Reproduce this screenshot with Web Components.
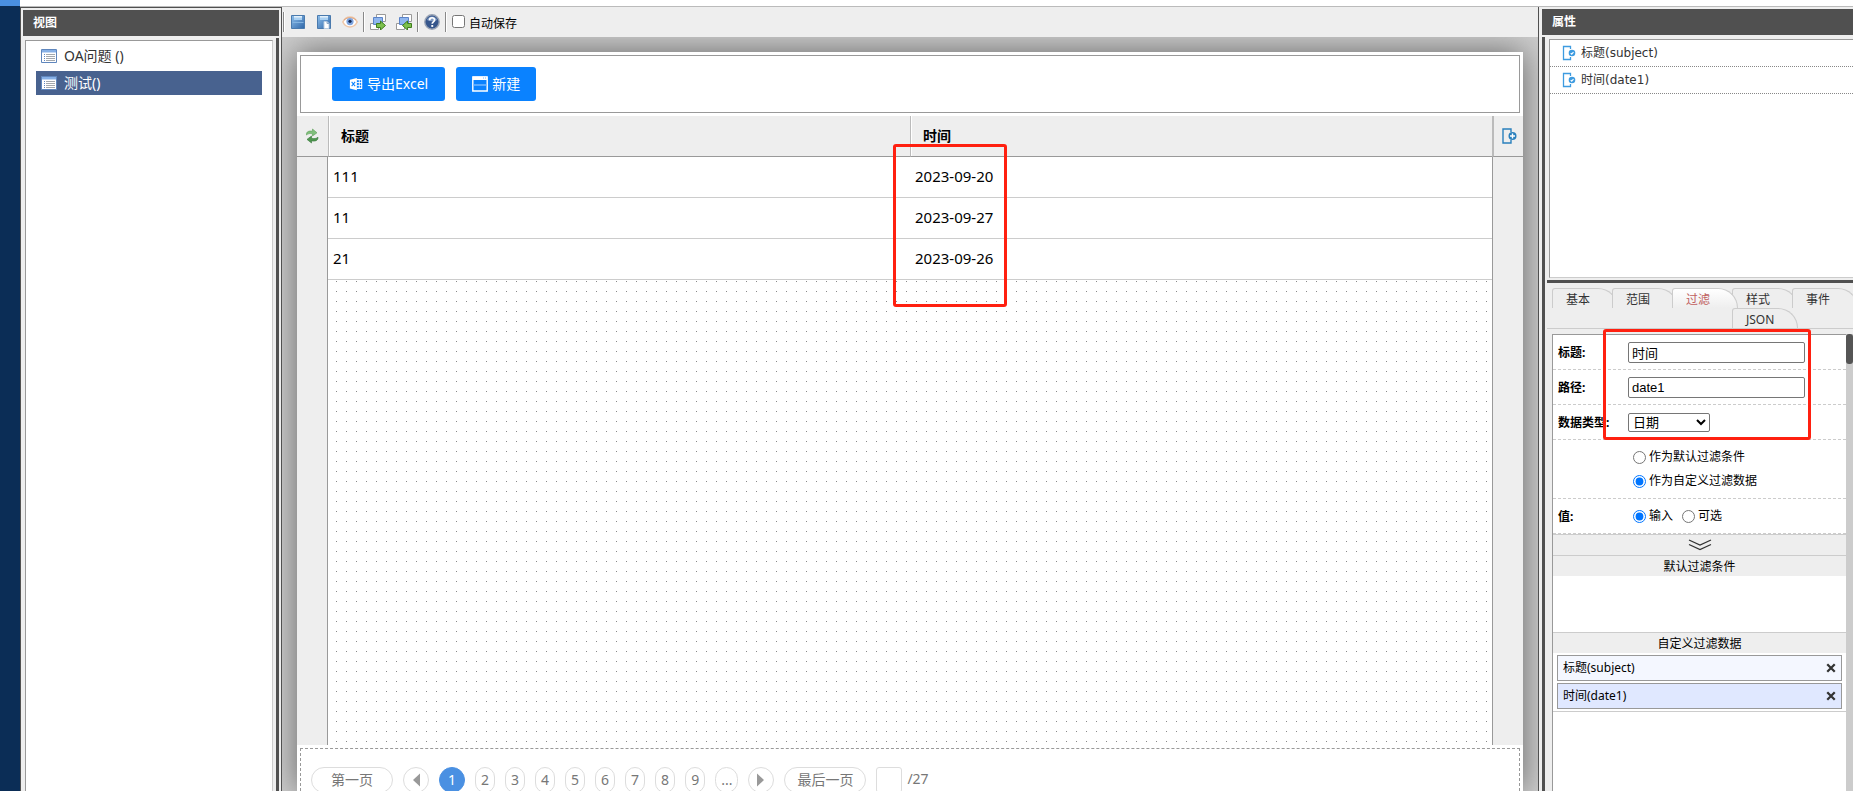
<!DOCTYPE html>
<html lang="zh-CN">
<head>
<meta charset="utf-8">
<title>视图设计</title>
<style>
  html, body {
    height: 100%;
    margin: 0;
    overflow: hidden;
  }

  body {
    font: 12px/18px "Noto Sans", "Noto Sans CJK SC", sans-serif;
    color: #000;
    background: #fff;
  }
</style>
</head>
<body>
<design-app>
  <side-panel slot="views" heading="视图" side="left">
    <view-list>
      <view-item>OA问题 ()</view-item>
      <view-item selected>测试()</view-item>
    </view-list>
  </side-panel>

  <tool-bar slot="main"></tool-bar>
  <page-stage slot="main">
    <page-actions>
      <action-button icon="excel">导出Excel</action-button>
      <action-button icon="window">新建</action-button>
    </page-actions>
    <data-grid></data-grid>
    <page-pager total="27" current="1"></page-pager>
  </page-stage>

  <side-panel slot="props" heading="属性" side="right">
    <field-list>
      <field-item>标题(subject)</field-item>
      <field-item>时间(date1)</field-item>
    </field-list>
    <prop-tabs></prop-tabs>
    <prop-form>
      <filter-item slot="custom">标题(subject)</filter-item>
      <filter-item slot="custom" selected>时间(date1)</filter-item>
    </prop-form>
  </side-panel>
</design-app>

<script>
class BaseElement extends HTMLElement {
  constructor() {
    super();

    this.attachShadow({mode: 'open'});
  }

  connectedCallback() {
    this.render();
  }

  render() {
    const template = document.createElement('template');

    template.innerHTML = `${this.getStyles()}\n${this.getContent()}`;

    this.shadowRoot.replaceChildren(template.content.cloneNode(true));
  }

  getStyles() {
    return '';
  }

  getContent() {
    return '<slot></slot>';
  }
}

const ICONS = {
  save: `
    <defs><linearGradient id="g" x1="0" y1="0" x2="1" y2="1"><stop offset="0" stop-color="#8fc0ec"/><stop offset="1" stop-color="#2e66a8"/></linearGradient></defs>
    <path d="M1.5 1.5h13v13h-13z" fill="url(#g)" stroke="#4a7aad"/>
    <path d="M4 2h8v4H4z" fill="#a9d0f2"/><path d="M4 2h8v1.500H4z" fill="#e2f0fb"/>
    <path d="M2.500 8.500h11" stroke="#84b4e0"/>`,
  saveas: `
    <defs><linearGradient id="g" x1="0" y1="0" x2="1" y2="1"><stop offset="0" stop-color="#8fc0ec"/><stop offset="1" stop-color="#2e66a8"/></linearGradient></defs>
    <path d="M1.500 1.500h13v13h-13z" fill="url(#g)" stroke="#4a7aad"/>
    <path d="M4 2h8v4H4z" fill="#a9d0f2"/><path d="M4 2h8v1.500H4z" fill="#e2f0fb"/>
    <path d="M8 7.500h3l2 2v5H8z" fill="#fff" stroke="#b9cde2"/><path d="M11 7.500v2h2" fill="none" stroke="#8aa7c6"/>`,
  eye: `
    <path d="M.8 8C3 3.800 5.500 3 8 3s5 .8 7.200 5c-2.200 4.200-4.700 5-7.200 5S3 12.200.8 8z" fill="#fff" stroke="#efc7a8" stroke-width="1.600"/>
    <path d="M2 6c3-3 9-3 12 0" fill="none" stroke="#dba582"/>
    <circle cx="8" cy="7.600" r="3.600" fill="#7fa5e0"/><circle cx="8" cy="7.300" r="1.600" fill="#142a55"/>`,
  out: `
    <path d="M6.500.5h9v7h-9z" fill="#fff" stroke="#999"/><path d="M.5 9.500h8v6h-8z" fill="#fff" stroke="#999"/>
    <path d="M3.500 3.500h9v7h-9z" fill="#8fb6ee" stroke="#5b83c8"/>
    <path d="M6.500 9.500h4V7l5 4.500-5 4.500v-2.500h-4z" fill="#7cc04c" stroke="#3f7d1e"/>`,
  in: `
    <path d="M6.500.5h9v7h-9z" fill="#fff" stroke="#999"/><path d="M.5 9.500h8v6h-8z" fill="#fff" stroke="#999"/>
    <path d="M3.500 3.500h9v7h-9z" fill="#8fb6ee" stroke="#5b83c8"/>
    <path d="M15.500 9.500h-4V7l-5 4.500 5 4.500v-2.500h4z" fill="#7cc04c" stroke="#3f7d1e"/>`,
  help: `
    <circle cx="8" cy="8" r="7.200" fill="#36568c" stroke="#9aa4b5" stroke-width="1.400"/>
    <path d="M3 6a5.300 5.300 0 0 1 10 0c-3 1.600-7 1.600-10 0z" fill="#7f9ac4"/>
    <path d="M5.600 6.200c0-3.200 5-3.200 5-.2 0 1.900-2.400 1.900-2.400 3.800" fill="none" stroke="#fff" stroke-width="1.700"/>
    <path d="M7.300 11h1.900v1.900H7.300z" fill="#fff"/>`,
  view: `
    <path d="M.5 1.500h15v13H.5z" fill="#fff" stroke="#5f86bd"/><path d="M1 2h14v2.500H1z" fill="#86b0e6"/>
    <path d="M3 6.500h1M3 8.500h1M3 10.500h1M3 12.500h1" stroke="#5d86c4"/>
    <path d="M5 6.500h9M5 8.500h9M5 10.500h9M5 12.500h9" stroke="#a3a8ad"/>`,
  excel: `
    <path d="M1 3l8-2v14l-8-2z" fill="#fff"/><path d="M3 5.500l4 5M7 5.500l-4 5" stroke="#0a82ff" stroke-width="1.200"/>
    <path d="M9 3h5.500v10H9" fill="none" stroke="#fff" stroke-width="1.200"/>
    <path d="M9 6.300h6M9 9.600h6M11.800 3v10" stroke="#fff"/>`,
  window: `
    <path d="M.8 1h14.400v14H.8z" fill="none" stroke="#fff" stroke-width="1.400"/><path d="M1 .5h14v3.500H1z" fill="#fff"/>
    <path d="M1.500 9h13" stroke="#6fb5ff" stroke-width="1.600"/>
    <path d="M11 2h1M13 2h1" stroke="#72b5ff"/>`,
  swap: `
    <path d="M2.500 7C2 3.500 5 2.600 8.500 3.200V1L13 4.800 8.500 8V5.800C6 5.200 4 5.600 2.500 7z" fill="#80bf7c" stroke="#5aa055" stroke-width=".6"/>
    <path d="M14 9.200c.3 3.400-3 4.400-6.500 3.700V15L3 11.400 7.500 8v2.300c2.500.6 5 .3 6.500-1.100z" fill="#4f9650" stroke="#37783a" stroke-width=".6"/>`,
  field: `
    <path d="M9.500 4V1.500h-7v13h7V12" fill="none" stroke="#3d9be0" stroke-width="1.300"/>
    <circle cx="11" cy="8" r="3.300" fill="#3d9be0"/><path d="M9.700 8.200l1 1 1.800-2" fill="none" stroke="#fff" stroke-width="1.100"/>`,
  addfield: `
    <path d="M10 4V1H2v14h8v-3" fill="none" stroke="#2a80bd" stroke-width="1.400"/>
    <circle cx="11.500" cy="8" r="4" fill="#2a80bd"/><path d="M11.500 5.500v5M9 8h5" stroke="#fff" stroke-width="1.400"/>`,
  left: '<path d="M12 1.500v13L5 8z" fill="#999"/>',
  right: '<path d="M4 1.500v13L11 8z" fill="#999"/>',
  chevrons: '<path d="M1 2l11 5 11-5M1 6.500l11 5 11-5" fill="none" stroke="#333" stroke-width="1.300"/>',
  close: '<path d="M3 3l10 10M13 3L3 13" stroke="#333" stroke-width="3"/>'
};

class UiIcon extends BaseElement {
  getStyles() {
    return `
      <style>
        :host {
          display: block;
          flex: none;
          width: var(--icon-width, 16px);
          height: var(--icon-height, 16px);
        }

        svg {
          display: block;
          width: 100%;
          height: 100%;
        }
      </style>
    `;
  }

  getContent() {
    const name = this.getAttribute('name');
    const box = name === 'chevrons' ? '0 0 24 14' : '0 0 16 16';

    return `<svg viewBox="${box}" aria-hidden="true">${ICONS[name]}</svg>`;
  }
}

class DesignApp extends BaseElement {
  getStyles() {
    return `
      <style>
        :host {
          display: grid;
          grid-template: 6px minmax(0, 1fr) / 20px minmax(0, 1fr);
          height: 100vh;
        }

        .brand {
          background: #4a90e2;
        }

        .rail {
          grid-row: 2;
          background: #0b2d56;
        }

        .workspace {
          grid-area: 2 / 2;
          display: grid;
          grid-template-columns: 262px minmax(0, 1fr) 315px;
          border-top: 1px solid #bbb;
          background: #eee;
        }

        main {
          display: flex;
          flex-direction: column;
          min-width: 0;
          min-height: 0;
        }
      </style>
    `;
  }

  getContent() {
    return `
      <div class="brand"></div>
      <nav class="rail"></nav>
      <div class="workspace">
        <slot name="views"></slot>
        <main><slot name="main"></slot></main>
        <slot name="props"></slot>
      </div>
    `;
  }
}

class SidePanel extends BaseElement {
  getStyles() {
    return `
      <style>
        :host {
          display: flex;
          flex-direction: column;
          min-height: 0;
          box-sizing: border-box;
          background: #eee;
          overflow: hidden;
        }

        :host([side="left"]) {
          padding: 2px 2px 0;
          border: solid #505050;
          border-width: 1px 1px 0;
        }

        :host([side="right"]) {
          padding: 2px 0 0 3px;
          border-left: 1px solid #505050;
        }

        h2 {
          margin: 0 0 2px;
          padding: 0 10px;
          font-size: 12px;
          line-height: 26px;
          color: #fff;
          background: #505050;
        }

        .body {
          display: flex;
          flex: 1;
          flex-direction: column;
          min-height: 0;
        }

        :host([side="left"]) .body {
          padding: 2px 3px 0 2px;
          border-right: 3px solid #505050;
        }

        :host([side="right"]) .body {
          padding: 2px 0 0 2px;
          border-left: 3px solid #505050;
        }
      </style>
    `;
  }

  getContent() {
    return `
      <h2>${this.getAttribute('heading')}</h2>
      <div class="body"><slot></slot></div>
    `;
  }
}

class ViewList extends BaseElement {
  getStyles() {
    return `
      <style>
        :host {
          display: flex;
          flex: 1;
          flex-direction: column;
          gap: 3px;
          padding: 3px 10px;
          border: solid #999;
          border-width: 1px 0 0 1px;
          border-right: 1px solid #ccc;
          background: #fff;
        }
      </style>
    `;
  }
}

class ViewItem extends BaseElement {
  getStyles() {
    return `
      <style>
        :host {
          display: block;
          color: #333;
        }

        :host([selected]) {
          color: #fff;
          background: #48628f;
        }

        a {
          display: flex;
          align-items: center;
          gap: 7px;
          padding: 0 5px;
          font-size: 14px;
          line-height: 24px;
          color: inherit;
          text-decoration: none;
        }
      </style>
    `;
  }

  getContent() {
    return '<a href="#"><ui-icon name="view"></ui-icon><span><slot></slot></span></a>';
  }
}

class ToolBar extends BaseElement {
  getStyles() {
    return `
      <style>
        :host {
          display: flex;
          align-items: center;
          height: 30px;
          padding-left: 1px;
        }

        hr {
          box-sizing: border-box;
          width: 2px;
          height: 20px;
          margin: 0;
          border: 0;
          border-left: 1px solid #888;
          background: #fff;
        }

        button {
          padding: 0 5px;
          border: 0;
          background: none;
        }

        label {
          display: flex;
          align-items: flex-start;
          gap: 4px;
          padding: 4px 0 0 5px;
        }

        input {
          width: 13px;
          height: 13px;
          margin: 0;
        }
      </style>
    `;
  }

  getContent() {
    const groups = [
      [['save', '保存'], ['saveas', '另存为'], ['eye', '预览']],
      [['out', '导出'], ['in', '导入']],
      [['help', '帮助']]
    ];
    const buttons = groups.map((group) => '<hr>' + group.map(([icon, label]) => `
      <button type="button" aria-label="${label}"><ui-icon name="${icon}"></ui-icon></button>
    `).join('')).join('');

    return `${buttons}<hr><label><input type="checkbox">自动保存</label>`;
  }
}

class PageStage extends BaseElement {
  getStyles() {
    return `
      <style>
        :host {
          display: flex;
          flex: 1;
          min-height: 0;
          padding: 15px 15px 0;
          background: #ccc;
          overflow: hidden;
        }

        .page {
          display: flex;
          flex: 1;
          flex-direction: column;
          min-width: 0;
          background: #fff;
          box-shadow: 0 0 30px #666;
        }
      </style>
    `;
  }

  getContent() {
    return '<div class="page"><slot></slot></div>';
  }
}

class PageActions extends BaseElement {
  getStyles() {
    return `
      <style>
        :host {
          display: flex;
          gap: 11px;
          margin: 3px;
          padding: 11px 31px;
          border: 1px solid #999;
        }
      </style>
    `;
  }
}

class ActionButton extends BaseElement {
  getStyles() {
    return `
      <style>
        :host {
          display: block;
        }

        button {
          display: flex;
          align-items: center;
          gap: 4px;
          height: 34px;
          padding: 0 16px;
          border: 0;
          border-radius: 3px;
          font: inherit;
          font-size: 14px;
          line-height: 20px;
          color: #fff;
          background: #0a82ff;
        }

        :host([icon="excel"]) button {
          padding: 0 17px;
          --icon-width: 14px;
          --icon-height: 14px;
        }
      </style>
    `;
  }

  getContent() {
    return `
      <button type="button"><ui-icon name="${this.getAttribute('icon')}"></ui-icon><span><slot></slot></span></button>
    `;
  }
}

class DataGrid extends BaseElement {
  rows = [
    ['111', '2023-09-20'],
    ['11', '2023-09-27'],
    ['21', '2023-09-26']
  ];

  getStyles() {
    return `
      <style>
        :host {
          display: flex;
          flex: 1;
          flex-direction: column;
          min-height: 0;
        }

        table {
          width: 100%;
          table-layout: fixed;
          border-collapse: separate;
          border-spacing: 0;
          text-align: left;
        }

        th, td {
          box-sizing: border-box;
          height: 41px;
          padding: 0 5px 2px;
          font-size: 15px;
        }

        th {
          position: relative;
          padding: 0 12px;
          border-left: 1px solid #bbb;
          border-bottom: 1px solid #999;
          font-size: 14px;
          background: #eee;
          box-shadow: inset 1px 0 #fff;
        }

        td {
          border-bottom: 1px solid #ccc;
        }

        .gutter {
          width: 31px;
          padding: 0 7px;
          background: #eee;
        }

        th.gutter:first-child {
          border-left: 0;
          box-shadow: none;
        }

        td.gutter {
          border-bottom: 0;
        }

        .gutter:last-child {
          border-left: 1px solid #999;
        }

        th.gutter:last-child {
          border-left: 2px solid #bbb;
          box-shadow: none;
        }

        td.gutter:first-child,
        .filler .gutter:first-child {
          border-right: 1px solid #999;
        }

        .filler {
          display: flex;
          flex: 1;
        }

        .filler .gutter {
          box-sizing: border-box;
        }

        .dots {
          flex: 1;
          background: conic-gradient(from 270deg at 1px 1px, #888 90deg, transparent 0) 8px 1px / 10px 10px;
        }

        .mark {
          position: absolute;
          z-index: 2;
          top: 28px;
          left: -18px;
          box-sizing: border-box;
          width: 114px;
          height: 163px;
          border: 3px solid #ff2010;
          border-radius: 3px;
          pointer-events: none;
        }
      </style>
    `;
  }

  getContent() {
    const rows = this.rows.map(([title, date]) => `
      <tr><td class="gutter"></td><td>${title}</td><td>${date}</td><td class="gutter"></td></tr>
    `).join('');

    return `
      <table>
        <thead>
          <tr>
            <th class="gutter"><ui-icon name="swap"></ui-icon></th>
            <th>标题</th>
            <th>时间<div class="mark"></div></th>
            <th class="gutter"><ui-icon name="addfield"></ui-icon></th>
          </tr>
        </thead>
        <tbody>${rows}</tbody>
      </table>
      <div class="filler">
        <div class="gutter"></div>
        <div class="dots"></div>
        <div class="gutter"></div>
      </div>
    `;
  }
}

class PagePager extends BaseElement {
  getStyles() {
    return `
      <style>
        :host {
          display: flex;
          flex: none;
          align-items: flex-start;
          gap: 10px;
          box-sizing: border-box;
          height: 43px;
          margin: 3px 3px 0;
          padding: 18px 10px 0;
          border: dashed #999;
          border-width: 1px 1px 0;
          font-size: 14px;
          color: #777;
          overflow: hidden;
        }

        button, input {
          flex: none;
          box-sizing: border-box;
          height: 26px;
          padding: 0 5px;
          border: 1px solid #ddd;
          border-radius: 13px;
          font: inherit;
          line-height: 24px;
          color: inherit;
          background: #fff;
        }

        button[aria-current] {
          padding: 0 8px;
          border-color: #4a90e2;
          color: #fff;
          background: #4a90e2;
        }

        .edge {
          width: 82px;
          padding: 0;
        }

        .step {
          padding: 0 4px;
        }

        label {
          display: flex;
          gap: 5px;
          line-height: 24px;
        }

        input {
          width: 26px;
          border-radius: 3px;
        }
      </style>
    `;
  }

  getContent() {
    const current = Number(this.getAttribute('current'));
    const pages = [1, 2, 3, 4, 5, 6, 7, 8, 9].map((page) => `
      <button type="button"${page === current ? ' aria-current="page"' : ''}>${page}</button>
    `).join('');

    return `
      <button type="button" class="edge">第一页</button>
      <button type="button" class="step" aria-label="上一页"><ui-icon name="left"></ui-icon></button>
      ${pages}
      <button type="button">...</button>
      <button type="button" class="step" aria-label="下一页"><ui-icon name="right"></ui-icon></button>
      <button type="button" class="edge">最后一页</button>
      <label><input type="text" aria-label="页码">/${this.getAttribute('total')}</label>
    `;
  }
}

class FieldList extends BaseElement {
  getStyles() {
    return `
      <style>
        :host {
          display: block;
          flex: none;
          box-sizing: border-box;
          height: 239px;
          margin: 0 0 2px 2px;
          border: 1px solid #999;
          border-width: 1px 0 1px 1px;
          border-bottom-color: #ccc;
          background: #fff;
        }
      </style>
    `;
  }
}

class FieldItem extends BaseElement {
  getStyles() {
    return `
      <style>
        :host {
          display: flex;
          align-items: center;
          gap: 4px;
          padding-left: 11px;
          border-bottom: 1px dotted #888;
          font-family: "DejaVu Sans", "Noto Sans CJK SC", sans-serif;
          line-height: 26px;
          color: #333;
        }
      </style>
    `;
  }

  getContent() {
    return '<ui-icon name="field"></ui-icon><span><slot></slot></span>';
  }
}

class PropTabs extends BaseElement {
  getStyles() {
    return `
      <style>
        :host {
          display: grid;
          flex: none;
          grid-template-columns: repeat(5, 60px);
          grid-auto-rows: 20px;
          padding: 5px 0 0 5px;
          border-top: 3px solid #505050;
          border-bottom: 1px solid #ccc;
        }

        button {
          box-sizing: border-box;
          width: 66px;
          height: 20px;
          padding: 2px 0 0 13px;
          border: 1px solid #ccc;
          border-bottom: 0;
          border-radius: 3px 20px 0 0;
          font: inherit;
          line-height: 17px;
          text-align: left;
          color: #333;
          background: #eee;
        }

        button[aria-selected="true"] {
          z-index: 1;
          color: #c05f5f;
          background: linear-gradient(#fff, #eee);
        }

        button:last-child {
          grid-column: 4;
        }
      </style>
    `;
  }

  getContent() {
    return ['基本', '范围', '过滤', '样式', '事件', 'JSON'].map((name) => `
      <button type="button" role="tab" aria-selected="${name === '过滤'}">${name}</button>
    `).join('');
  }
}

class PropForm extends BaseElement {
  getStyles() {
    return `
      <style>
        :host {
          position: relative;
          display: flex;
          flex: 1;
          min-height: 0;
          margin: 5px 0 0 5px;
        }

        form {
          flex: 1;
          min-width: 0;
          border: solid #999;
          border-width: 1px 0 0 1px;
          background: #fff;
        }

        .scroll {
          width: 7px;
          background: #ccc;
        }

        .thumb {
          height: 30px;
          border-radius: 3px;
          background: #555;
        }

        .row {
          display: grid;
          grid-template-columns: 70px minmax(0, 1fr);
          align-items: center;
          min-height: 34px;
          padding-left: 5px;
          border-bottom: 1px dashed #ccc;
        }

        .caption {
          padding-top: 2px;
          font-weight: bold;
          white-space: nowrap;
        }

        input[type="text"], select {
          display: block;
          box-sizing: border-box;
          border: 1px solid #767676;
          border-radius: 2px;
          font: 13px "Liberation Sans", "Noto Sans CJK SC", sans-serif;
          color: #000;
          background: #fff;
        }

        input[type="text"] {
          width: 177px;
          height: 21px;
          padding: 0 3px;
        }

        select {
          width: 82px;
          height: 19px;
          padding: 0;
        }

        .radios {
          display: flex;
          gap: 9px;
          padding-left: 5px;
        }

        .stacked {
          flex-direction: column;
          gap: 6px;
        }

        .tall {
          min-height: 58px;
        }

        .radios label {
          display: flex;
          align-items: center;
          gap: 3px;
        }

        input[type="radio"] {
          width: 13px;
          height: 13px;
          margin: 0;
        }

        .expand {
          display: flex;
          justify-content: center;
          align-items: center;
          width: 100%;
          height: 21px;
          padding: 0;
          border: 0;
          border-top: 1px solid #ccc;
          background: #eee;
          --icon-width: 24px;
          --icon-height: 14px;
        }

        h3 {
          margin: 0;
          padding-top: 2px;
          border-top: 1px solid #ccc;
          font-size: 12px;
          font-weight: normal;
          line-height: 18px;
          text-align: center;
          background: #eee;
        }

        .filters {
          display: grid;
          align-content: start;
          gap: 2px;
          padding: 2px 4px;
        }

        .empty {
          min-height: 52px;
        }

        .custom {
          border-bottom: 1px solid #ccc;
        }

        .mark {
          position: absolute;
          z-index: 2;
          top: -5px;
          left: 51px;
          box-sizing: border-box;
          width: 208px;
          height: 111px;
          border: 3px solid #ff2010;
          border-radius: 3px;
          pointer-events: none;
        }
      </style>
    `;
  }

  getContent() {
    return `
      <form>
        <div class="row">
          <label class="caption" for="title">标题:</label>
          <div><input type="text" id="title" value="时间"></div>
        </div>
        <div class="row">
          <label class="caption" for="path">路径:</label>
          <div><input type="text" id="path" value="date1"></div>
        </div>
        <div class="row">
          <label class="caption" for="type">数据类型:</label>
          <div><select id="type"><option>日期</option></select></div>
        </div>
        <div class="row tall">
          <span></span>
          <div class="radios stacked">
            <label><input type="radio" name="role">作为默认过滤条件</label>
            <label><input type="radio" name="role" checked>作为自定义过滤数据</label>
          </div>
        </div>
        <div class="row">
          <span class="caption">值:</span>
          <div class="radios">
            <label><input type="radio" name="source" checked>输入</label>
            <label><input type="radio" name="source">可选</label>
          </div>
        </div>
        <button type="button" class="expand" aria-label="展开"><ui-icon name="chevrons"></ui-icon></button>
        <h3>默认过滤条件</h3>
        <div class="filters empty"></div>
        <h3>自定义过滤数据</h3>
        <div class="filters custom"><slot name="custom"></slot></div>
      </form>
      <div class="scroll"><div class="thumb"></div></div>
      <div class="mark"></div>
    `;
  }
}

class FilterItem extends BaseElement {
  getStyles() {
    return `
      <style>
        :host {
          display: flex;
          align-items: center;
          justify-content: space-between;
          padding: 0 4px 0 5px;
          border: 1px solid #999;
          line-height: 24px;
          background: #f4f7ff;
        }

        :host([selected]) {
          background: #e0e8ff;
        }

        button {
          padding: 0;
          border: 0;
          background: none;
          --icon-width: 12px;
          --icon-height: 12px;
        }
      </style>
    `;
  }

  getContent() {
    return `
      <span><slot></slot></span>
      <button type="button" aria-label="删除"><ui-icon name="close"></ui-icon></button>
    `;
  }
}

customElements.define('ui-icon', UiIcon);
customElements.define('design-app', DesignApp);
customElements.define('side-panel', SidePanel);
customElements.define('view-list', ViewList);
customElements.define('view-item', ViewItem);
customElements.define('tool-bar', ToolBar);
customElements.define('page-stage', PageStage);
customElements.define('page-actions', PageActions);
customElements.define('action-button', ActionButton);
customElements.define('data-grid', DataGrid);
customElements.define('page-pager', PagePager);
customElements.define('field-list', FieldList);
customElements.define('field-item', FieldItem);
customElements.define('prop-tabs', PropTabs);
customElements.define('prop-form', PropForm);
customElements.define('filter-item', FilterItem);
</script>
</body>
</html>
